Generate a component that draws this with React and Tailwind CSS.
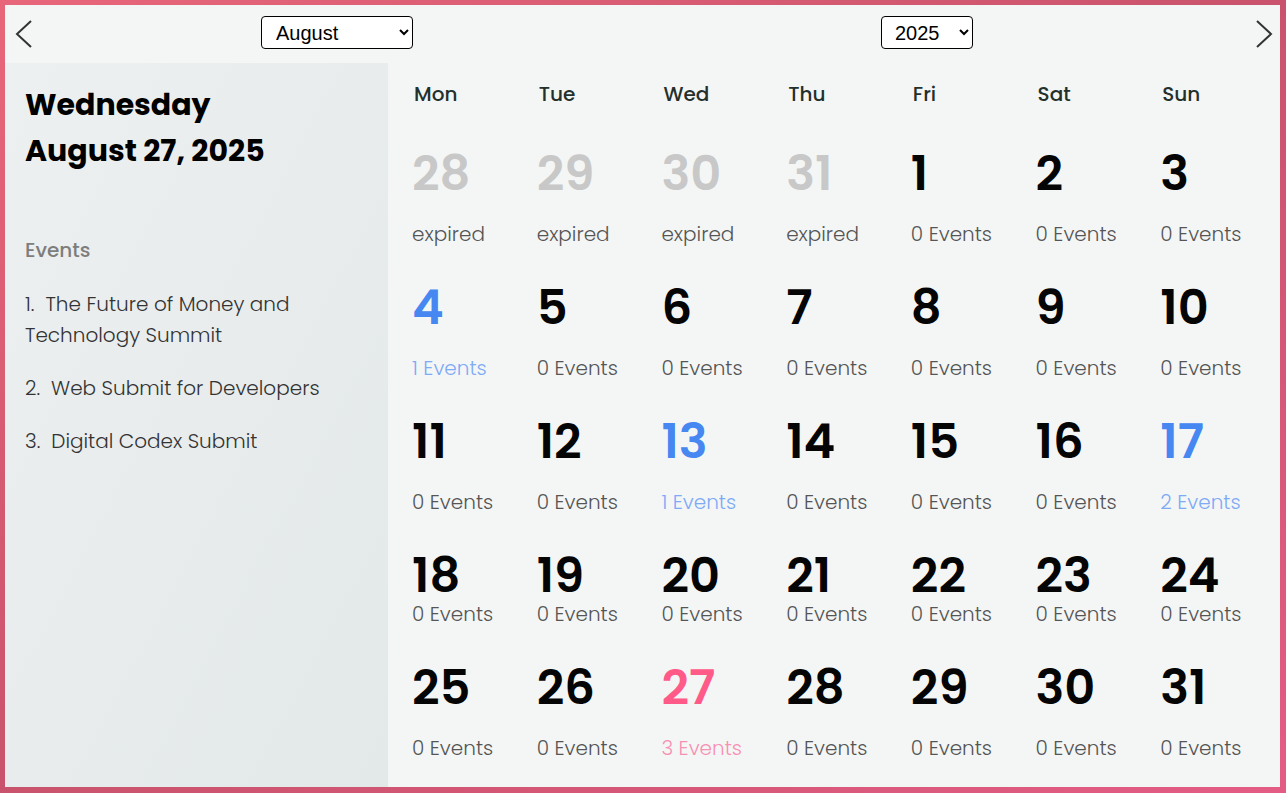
import { useState } from 'react';

const FONT = { fontFamily: '"Poppins", "Inter", "Noto Sans", sans-serif' };

const MONTHS = [
  'January', 'February', 'March', 'April', 'May', 'June',
  'July', 'August', 'September', 'October', 'November', 'December',
];
const WEEKDAYS = ['Mon', 'Tue', 'Wed', 'Thu', 'Fri', 'Sat', 'Sun'];
const EVENT_COUNT = { 4: 1, 13: 1, 17: 2, 27: 3 };
const TODAY = 27;
const TODAY_EVENTS = [
  'The Future of Money and Technology Summit',
  'Web Submit for Developers',
  'Digital Codex Submit',
];

// 5 weeks, Mon-first; leading days belong to July
const buildWeeks = () => {
  const cells = [28, 29, 30, 31].map((d) => ({ day: d, expired: true }));
  for (let d = 1; d <= 31; d++) cells.push({ day: d, expired: false });
  const weeks = [];
  for (let i = 0; i < cells.length; i += 7) weeks.push(cells.slice(i, i + 7));
  return weeks;
};

function Chevron({ dir }) {
  return (
    <svg width="20" height="30" viewBox="0 0 20 30" fill="none">
      <path
        d={dir === 'left' ? 'M17 2 L3 15 L17 28' : 'M3 2 L17 15 L3 28'}
        stroke="#333"
        strokeWidth="2"
      />
    </svg>
  );
}

function DayCell({ cell, tight }) {
  const count = EVENT_COUNT[cell.day] || 0;
  let numColor = 'text-[#050505]';
  let subColor = 'text-[#555555]';
  if (cell.expired) {
    numColor = 'text-[#c8c8c8]';
  } else if (cell.day === TODAY) {
    numColor = 'text-[#ff5a88]';
    subColor = 'text-[#f890b2]';
  } else if (count > 0) {
    numColor = 'text-[#4687f2]';
    subColor = 'text-[#7eaaf6]';
  }

  return (
    <div className="flex flex-col">
      <span className={`pt-[2px] text-[48px] leading-[48px] font-semibold ${numColor}`}>
        {cell.day}
      </span>
      <span
        className={`text-[20px] leading-[28px] font-light whitespace-nowrap ${subColor} ${
          tight ? 'mt-[0px]' : 'mt-[22px]'
        }`}
      >
        {cell.expired ? 'expired' : `${count} Events`}
      </span>
    </div>
  );
}

export default function App() {
  const [month, setMonth] = useState(7);
  const [year, setYear] = useState(2025);
  const weeks = buildWeeks();

  return (
    <div
      className="w-screen h-screen p-[5px] pr-[6px] pb-[6px] bg-gradient-to-br from-[#e8667a] via-[#c9536c] to-[#e35c84]"
      style={FONT}
    >
      <div className="w-full h-full flex flex-col bg-[#f4f6f5]">
        <div className="h-[58px] flex items-start pl-[9px] pr-[6px]">
          <button className="mt-[14px] cursor-pointer">
            <Chevron dir="left" />
          </button>
          <select
            value={month}
            onChange={(e) => setMonth(Number(e.target.value))}
            className="ml-[227px] mt-[11px] w-[152px] h-[33px] pl-[10px] pr-[4px] bg-white border border-black rounded-[4px] text-[20px] text-black"
            style={{ fontFamily: '"Liberation Sans", Arial, sans-serif' }}
          >
            {MONTHS.map((m, i) => (
              <option key={m} value={i}>
                {m}
              </option>
            ))}
          </select>
          <select
            value={year}
            onChange={(e) => setYear(Number(e.target.value))}
            className="ml-[468px] mt-[11px] w-[92px] h-[33px] pl-[9px] pr-[4px] bg-white border border-black rounded-[4px] text-[20px] text-black"
            style={{ fontFamily: '"Liberation Sans", Arial, sans-serif' }}
          >
            {[2023, 2024, 2025, 2026, 2027].map((y) => (
              <option key={y} value={y}>
                {y}
              </option>
            ))}
          </select>
          <button className="ml-auto mt-[14px] cursor-pointer">
            <Chevron dir="right" />
          </button>
        </div>

        <div className="flex-1 flex min-h-0">
          <aside className="w-[383px] shrink-0 pt-[19px] pl-[20px] pr-[20px] bg-gradient-to-br from-[#edf0f0] to-[#e3e8e9]">
            <h1 className="text-[30px] leading-[46px] font-bold text-black">
              Wednesday
              <br />
              August 27, 2025
            </h1>
            <p className="mt-[62px] text-[20px] leading-[28px] font-medium text-[#7d7d7d]">
              Events
            </p>
            <ol className="mt-[25px] flex flex-col gap-[22px]">
              {TODAY_EVENTS.map((title, i) => (
                <li
                  key={title}
                  className="text-[20px] leading-[31px] font-light text-[#333333]"
                >
                  {`${i + 1}.\u00a0 ${title}`}
                </li>
              ))}
            </ol>
          </aside>

          <main className="flex-1 pl-[24px] pt-[17px]">
            <div className="w-[873px] grid grid-cols-7">
              {WEEKDAYS.map((d) => (
                <span
                  key={d}
                  className="pl-[2px] text-[20px] leading-[28px] font-medium text-[#23302c]"
                >
                  {d}
                </span>
              ))}
            </div>
            <div className="mt-[40px] w-[873px] flex flex-col gap-[34px]">
              {weeks.map((week, wi) => (
                <div key={wi} className="grid grid-cols-7">
                  {week.map((cell) => (
                    <DayCell
                      key={`${wi}-${cell.day}`}
                      cell={cell}
                      tight={wi === 3}
                    />
                  ))}
                </div>
              ))}
            </div>
          </main>
        </div>
      </div>
    </div>
  );
}
